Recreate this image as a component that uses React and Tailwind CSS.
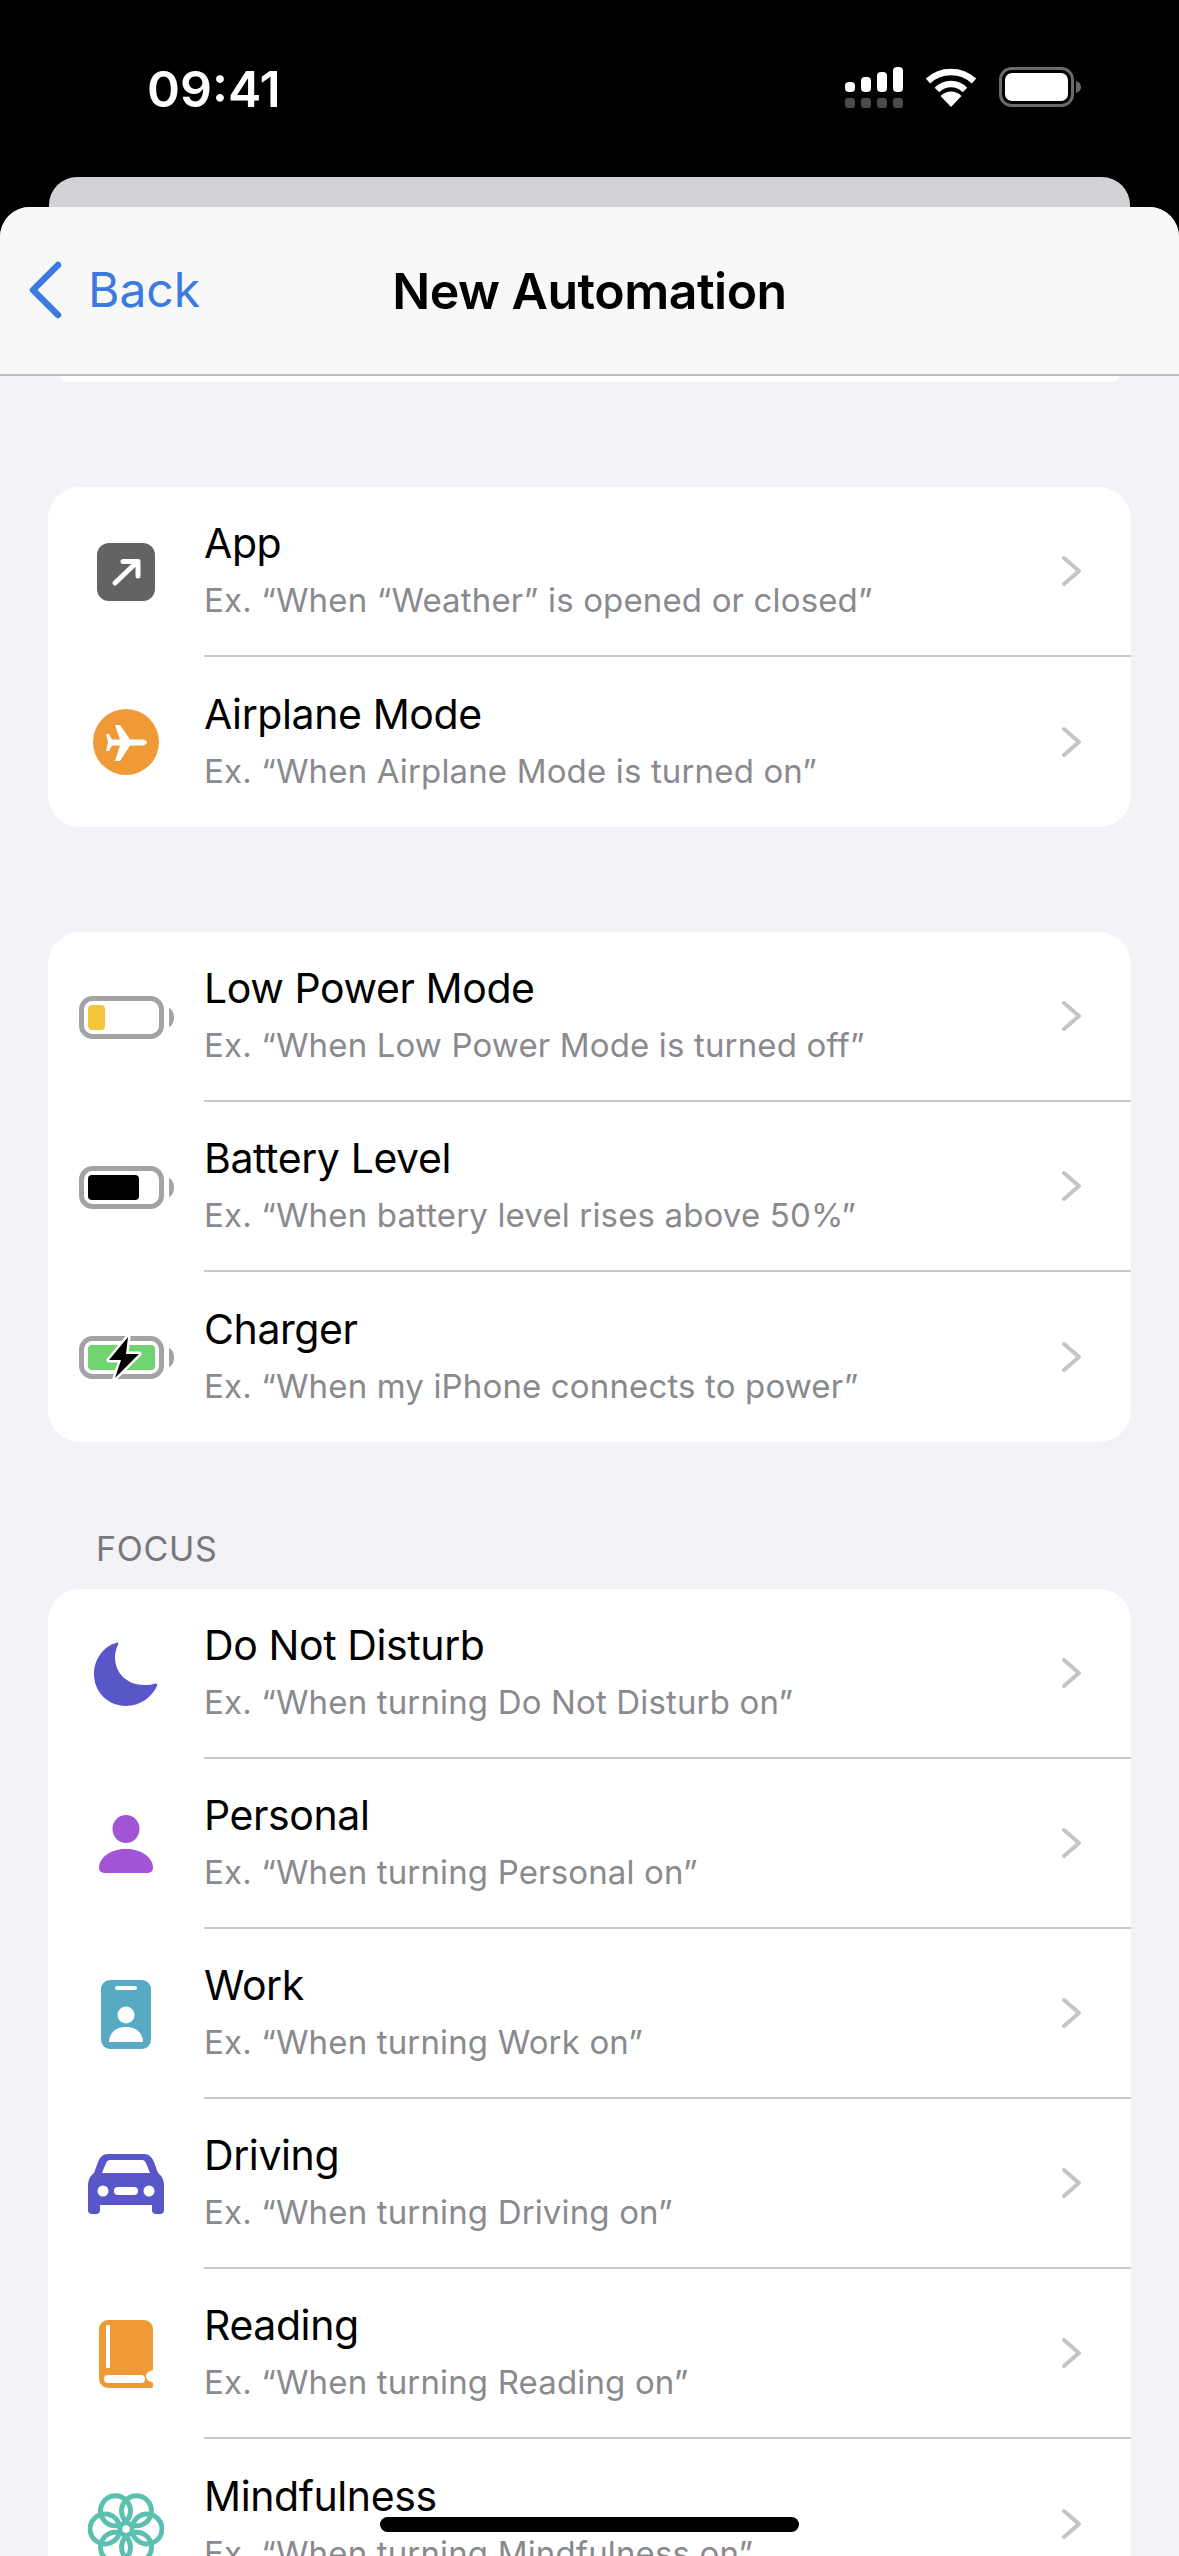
const Chevron = () => (
  <svg width="22" height="32" viewBox="0 0 22 32" fill="none">
    <path d="M3 3 L18 16 L3 29" stroke="#c4c4c7" strokeWidth="4" strokeLinecap="round" strokeLinejoin="round" />
  </svg>
);

const AppIcon = () => (
  <svg width="58" height="58" viewBox="0 0 58 58">
    <rect width="58" height="58" rx="12" fill="#636366" />
    <path d="M18 40 L40 19 M26 18.500 H41 V33" fill="none" stroke="#fff" strokeWidth="5" strokeLinecap="round" strokeLinejoin="round" />
  </svg>
);

const PlaneIcon = () => (
  <svg width="66" height="66" viewBox="0 0 66 66">
    <circle cx="33" cy="33" r="33" fill="#f09a37" />
    <path d="M54 33.500c0-1.500-2.500-3-5-3H37L27 16h-5l5 14.500H19L16 25h-3l2 8.500L13 42h3l3-5.500h8L22 52h5l10-15.500h12c2.500 0 5-1.500 5-3z" fill="#fff" />
  </svg>
);

const BatteryIcon = ({ children }) => (
  <svg width="95" height="43" viewBox="0 0 95 43">
    <rect x="2.500" y="2.500" width="80" height="38" rx="11" fill="none" stroke="#a3a3a6" strokeWidth="5" />
    <path d="M90 12c3 1 5 5 5 9.500s-2 8.500-5 9.500z" fill="#a3a3a6" />
    {children}
  </svg>
);

const MoonIcon = () => (
  <svg width="64" height="64" viewBox="0 0 64 64">
    <path d="M22 1C10 4 0 17 0 32c0 18 14 32 32 32 14 0 26-9 31-20 1-2-1-3-3-2-3 1-7 1-10 1-17 0-29-12-29-28 0-4 1-8 3-12 1-2 0-3-2-2z" fill="#5856c9" />
  </svg>
);

const PersonIcon = () => (
  <svg width="54" height="58" viewBox="0 0 54 58">
    <ellipse cx="27" cy="14" rx="13.500" ry="14" fill="#a155d6" />
    <path d="M0 53C0 42 12 34 27 34s27 8 27 19a5 5 0 0 1-5 5H5a5 5 0 0 1-5-5z" fill="#a155d6" />
  </svg>
);

const WorkIcon = () => (
  <svg width="50" height="69" viewBox="0 0 50 69">
    <rect width="50" height="69" rx="9" fill="#57a9c4" />
    <rect x="14" y="6" width="22" height="4" rx="2" fill="#fff" />
    <circle cx="25" cy="35" r="8.500" fill="#fff" />
    <path d="M8 62c0-9 7-15 17-15s17 6 17 15z" fill="#fff" />
  </svg>
);

const CarIcon = () => (
  <svg width="76" height="60" viewBox="0 0 76 60">
    <path d="M20 0H56c5 0 8 3 10 8l4 11c4 3 6 7 6 13V56a4 4 0 0 1-4 4H68a4 4 0 0 1-4-4V51H12V56a4 4 0 0 1-4 4H4a4 4 0 0 1-4-4V32c0-6 2-10 6-13L10 8C12 3 15 0 20 0z" fill="#5856c9" />
    <path d="M22 6H54c2 0 3 1 4 3l4 10H14L18 9c1-2 2-3 4-3z" fill="#fff" />
    <circle cx="15" cy="37" r="5.500" fill="#fff" />
    <circle cx="61" cy="37" r="5.500" fill="#fff" />
    <rect x="26" y="33" width="24" height="8" rx="4" fill="#fff" />
  </svg>
);

const BookIcon = () => (
  <svg width="54" height="69" viewBox="0 0 54 69">
    <path d="M9 0H45a9 9 0 0 1 9 9V50c-4 1-7 3-7 6 0 3 2 5 5 6a3 3 0 0 1-1 6H9a9 9 0 0 1-9-9V9a9 9 0 0 1 9-9z" fill="#f09a37" />
    <rect x="7" y="5" width="4" height="43" rx="1" fill="#fff" />
    <rect x="5" y="55" width="41" height="8" rx="4" fill="#fff" />
  </svg>
);

const FlowerIcon = () => (
  <svg width="76" height="76" viewBox="0 0 76 76" className="translate-y-[5px]">
    <g fill="none" stroke="#5cc0b0" strokeWidth="5">
      <circle cx="27.500" cy="19.800" r="15" />
      <circle cx="48.500" cy="19.800" r="15" />
      <circle cx="59" cy="38" r="15" />
      <circle cx="48.500" cy="56.200" r="15" />
      <circle cx="27.500" cy="56.200" r="15" />
      <circle cx="17" cy="38" r="15" />
    </g>
  </svg>
);

const Row = ({ icon, title, sub, last }) => (
  <div className="flex h-[170px] items-stretch">
    <div className="flex w-[156px] shrink-0 items-center justify-center">{icon}</div>
    <div className={`flex flex-1 items-center pr-[48px] ${last ? "" : "border-b-2 border-[#c9c9cb]"}`}>
      <div className="flex-1">
        <div className="text-[41px] leading-[52px] tracking-[-0.4px] text-black">{title}</div>
        <div className="mt-[6px] text-[33px] leading-[50px] tracking-[0.15px] text-[#8a8a8e]">{sub}</div>
      </div>
      <Chevron />
    </div>
  </div>
);

const Group = ({ children, className = "" }) => (
  <div className={`mx-[48px] overflow-hidden rounded-[32px] bg-white ${className}`}>{children}</div>
);

export default function App() {
  return (
    <div className="h-[2556px] w-[1179px] overflow-hidden bg-black font-['Inter','Liberation_Sans',sans-serif]">
      {/* status bar */}
      <div className="flex h-[177px] items-start justify-between pt-[60px] pl-[147px] pr-[98px]">
        <div className="text-[50px] leading-[58px] font-semibold text-white">09:41</div>
        <div className="flex items-start gap-[22px] pt-[7px]">
          <svg width="58" height="41" viewBox="0 0 58 41">
            <rect x="0" y="15" width="10" height="10" rx="4" fill="#fff" />
            <rect x="16" y="10" width="10" height="15" rx="4" fill="#fff" />
            <rect x="32" y="5" width="10" height="20" rx="4" fill="#fff" />
            <rect x="48" y="0" width="10" height="25" rx="4" fill="#fff" />
            <rect x="0" y="31" width="10" height="10" rx="3" fill="#4a4a4a" />
            <rect x="16" y="31" width="10" height="10" rx="3" fill="#4a4a4a" />
            <rect x="32" y="31" width="10" height="10" rx="3" fill="#4a4a4a" />
            <rect x="48" y="31" width="10" height="10" rx="3" fill="#4a4a4a" />
          </svg>
          <svg width="52" height="40" viewBox="0 0 52 40">
            <path d="M3 14C16 2 36 2 49 14" fill="none" stroke="#fff" strokeWidth="6.500" />
            <path d="M12 23C20 15 32 15 40 23" fill="none" stroke="#fff" strokeWidth="6.500" />
            <path d="M15.500 29C21 23 31 23 36.500 29L26 40z" fill="#fff" />
          </svg>
          <svg width="82" height="40" viewBox="0 0 82 40">
            <rect x="1.500" y="1.500" width="72" height="37" rx="11" fill="none" stroke="#6a6a6a" strokeWidth="3" />
            <rect x="6" y="6" width="63" height="28" rx="7" fill="#fff" />
            <path d="M77 14c3 1 5 3 5 6s-2 5-5 6z" fill="#6a6a6a" />
          </svg>
        </div>
      </div>

      {/* card behind the sheet */}
      <div className="mx-[49px] -mb-[30px] h-[60px] rounded-t-[28px] bg-[#d1d1d6]" />

      {/* sheet */}
      <div className="relative h-[2349px] overflow-hidden rounded-t-[30px] bg-[#f2f2f7]">
        <div className="relative flex h-[169px] items-center justify-center border-b-2 border-[#bcbcbe] bg-[#f8f8f9]">
          <div className="absolute top-[53px] left-[28px] flex items-center gap-[26px]">
            <svg width="34" height="58" viewBox="0 0 34 58" fill="none">
              <path d="M30 4 L5 29 L30 54" stroke="#3b7ae0" strokeWidth="6.500" strokeLinecap="round" strokeLinejoin="round" />
            </svg>
            <span className="text-[48px] leading-[60px] text-[#3b7ae0]">Back</span>
          </div>
          <h1 className="text-[50px] leading-[60px] font-semibold tracking-[-0.5px] text-black">New Automation</h1>
        </div>
        <div className="mx-[60px] h-[6px] rounded-b-[14px] bg-white" />

        <Group className="mt-[105px]">
          <Row icon={<AppIcon />} title="App" sub="Ex. “When “Weather” is opened or closed”" />
          <Row icon={<PlaneIcon />} title="Airplane Mode" sub="Ex. “When Airplane Mode is turned on”" last />
        </Group>

        <Group className="mt-[105px]">
          <Row
            icon={<BatteryIcon><rect x="9" y="9" width="17" height="25" rx="4" fill="#f4c53b" /></BatteryIcon>}
            title="Low Power Mode"
            sub="Ex. “When Low Power Mode is turned off”"
          />
          <Row
            icon={<BatteryIcon><rect x="9" y="9" width="51" height="25" rx="4" fill="#000" /></BatteryIcon>}
            title="Battery Level"
            sub="Ex. “When battery level rises above 50%”"
          />
          <Row
            icon={
              <BatteryIcon>
                <rect x="9" y="9" width="67" height="25" rx="4" fill="#6fd46f" />
                <path d="M49 1 L30 24 H42 L36 42 L60 18 H47 Z" fill="#000" stroke="#fff" strokeWidth="5" strokeLinejoin="round" paintOrder="stroke" />
              </BatteryIcon>
            }
            title="Charger"
            sub="Ex. “When my iPhone connects to power”"
            last
          />
        </Group>

        <div className="mt-[85px] mb-[19px] pl-[96px] text-[34px] leading-[43px] tracking-[0.7px] text-[#77777c]">FOCUS</div>

        <Group>
          <Row icon={<MoonIcon />} title="Do Not Disturb" sub="Ex. “When turning Do Not Disturb on”" />
          <Row icon={<PersonIcon />} title="Personal" sub="Ex. “When turning Personal on”" />
          <Row icon={<WorkIcon />} title="Work" sub="Ex. “When turning Work on”" />
          <Row icon={<CarIcon />} title="Driving" sub="Ex. “When turning Driving on”" />
          <Row icon={<BookIcon />} title="Reading" sub="Ex. “When turning Reading on”" />
          <Row icon={<FlowerIcon />} title="Mindfulness" sub="Ex. “When turning Mindfulness on”" last />
        </Group>

        {/* home indicator */}
        <div className="absolute bottom-[24px] left-[380px] h-[15px] w-[419px] rounded-full bg-black" />
      </div>
    </div>
  );
}
